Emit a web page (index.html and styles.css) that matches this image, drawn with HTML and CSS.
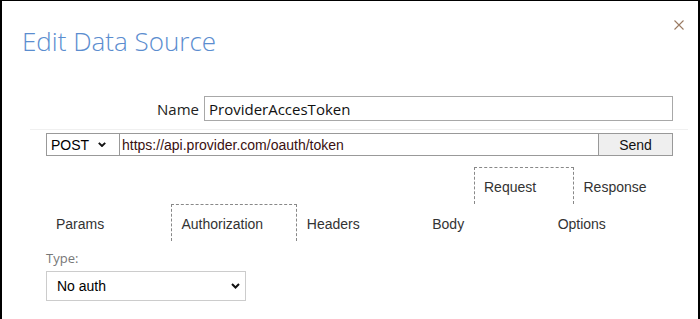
FILE: index.html
```html
<!DOCTYPE html>
<html lang="en">
<head>
    <meta charset="UTF-8">
    <title>Edit Data Source</title>
    <link rel="stylesheet" href="styles.css">
</head>
<body>
    <div class="dialog">
        <header class="dialog-header">
            <h1>Edit Data Source</h1>
            <button class="close" title="Close">
                <svg width="10" height="10" viewBox="0 0 10 10">
                    <path d="M0.5 0.5 L9.5 9.5 M9.5 0.5 L0.5 9.5" stroke="#9a7a62" stroke-width="1.1" fill="none"/>
                </svg>
            </button>
        </header>

        <div class="dialog-body">
            <div class="name-row">
                <label for="ds-name">Name</label>
                <input type="text" id="ds-name" value="ProviderAccesToken">
            </div>

            <hr class="sep">

            <!-- request line -->
            <div class="request-row">
                <div class="method">
                    <span>POST</span>
                    <svg width="8" height="5" viewBox="0 0 8 5"><path d="M0.8 0.8 L4 4 L7.2 0.8" stroke="#111" stroke-width="1.9" fill="none"/></svg>
                </div>
                <input type="text" class="url" value="https://api.provider.com/oauth/token">
                <button class="send">Send</button>
            </div>

            <div class="tabs tabs-top">
                <div class="tab active">Request</div>
                <div class="tab">Response</div>
            </div>

            <div class="tabs tabs-sub">
                <div class="tab">Params</div>
                <div class="tab active">Authorization</div>
                <div class="tab">Headers</div>
                <div class="tab">Body</div>
                <div class="tab">Options</div>
            </div>

            <div class="auth">
                <div class="field-label">Type:</div>
                <div class="auth-type">
                    <span>No auth</span>
                    <svg width="9" height="6" viewBox="0 0 9 6"><path d="M1 1 L4.5 4.5 L8 1" stroke="#111" stroke-width="2" fill="none"/></svg>
                </div>
            </div>
        </div>
    </div>
</body>
</html>
```
FILE: styles.css
```css
body {
    margin: 0;
    background: #fff;
}
.dialog {
    width: 700px;
    height: 319px;
    box-sizing: border-box;
    border: 2px solid #000;
    border-top-width: 1px;
    border-bottom: none;
    overflow: hidden;
    background: #fff;
}
.dialog-header {
    display: flex;
    justify-content: space-between;
    align-items: flex-start;
    padding: 22px 14px 0 20px;
}
h1 {
    margin: 0;
    font-family: "Open Sans", "Noto Sans", sans-serif;
    font-weight: 300;
    font-size: 26px;
    line-height: 36px;
    color: #5b8dcf;
}
.close {
    background: none;
    border: none;
    padding: 0;
    margin-top: -3px;
    width: 10px;
    height: 10px;
    cursor: pointer;
    display: block;
}
.close svg {
    display: block;
}
.dialog-body {
    padding: 0 25px 0 44px;
}
.name-row {
    display: flex;
    align-items: center;
    gap: 5px;
    margin-top: 37px;
}
.name-row label {
    width: 153px;
    text-align: right;
    font-family: "Open Sans", "Noto Sans", sans-serif;
    font-size: 15px;
    color: #222;
}
.name-row input {
    flex: 1;
    height: 25px;
    box-sizing: border-box;
    border: 1px solid #a8a8a8;
    padding: 0 4px;
    font-family: "Open Sans", "Noto Sans", sans-serif;
    font-size: 15px;
    color: #111;
    outline: none;
}
.sep {
    border: none;
    border-top: 1px solid #f0f0f0;
    margin: 8px -15px 3px -16px;
}
.request-row {
    display: flex;
    height: 23px;
    font-family: "Liberation Sans", Arial, sans-serif;
    font-size: 14px;
}
.method {
    width: 74px;
    box-sizing: border-box;
    border: 1px solid #999;
    display: flex;
    align-items: center;
    justify-content: space-between;
    padding: 0 16px 0 4px;
    color: #000;
}
.method svg {
    margin-right: -3px;
}
.url {
    flex: 1;
    box-sizing: border-box;
    border: 1px solid #999;
    border-left: none;
    padding: 0 2px;
    font-family: inherit;
    font-size: 14px;
    color: #3a1010;
    outline: none;
}
.send {
    width: 74px;
    box-sizing: border-box;
    border: 1px solid #999;
    border-left: none;
    background: #efefef;
    font-family: inherit;
    font-size: 14px;
    color: #111;
    padding: 0;
}
.tabs {
    display: flex;
    font-family: "Liberation Sans", Arial, sans-serif;
    font-size: 14px;
    color: #333;
}
.tabs-top {
    justify-content: flex-end;
    margin-top: 11px;
}
.tabs-top .tab {
    width: 99.5px;
}
.tabs-sub .tab {
    flex: 1;
}
.tab {
    box-sizing: border-box;
    height: 37px;
    padding: 9px 0 0 9px;
    line-height: 20px;
    border: 1px dashed transparent;
    border-bottom: none;
}
.tab.active {
    border-color: #888;
}
.auth {
    margin-top: 8px;
}
.field-label {
    font-family: "Open Sans", "Noto Sans", sans-serif;
    font-size: 13px;
    line-height: 18px;
    color: #777;
}
.auth-type {
    margin-top: 4px;
    width: 200px;
    height: 30px;
    box-sizing: border-box;
    border: 1px solid #ccc;
    display: flex;
    align-items: center;
    justify-content: space-between;
    padding: 0 5px 0 10px;
    font-family: "Liberation Sans", Arial, sans-serif;
    font-size: 14px;
    color: #000;
}
```
